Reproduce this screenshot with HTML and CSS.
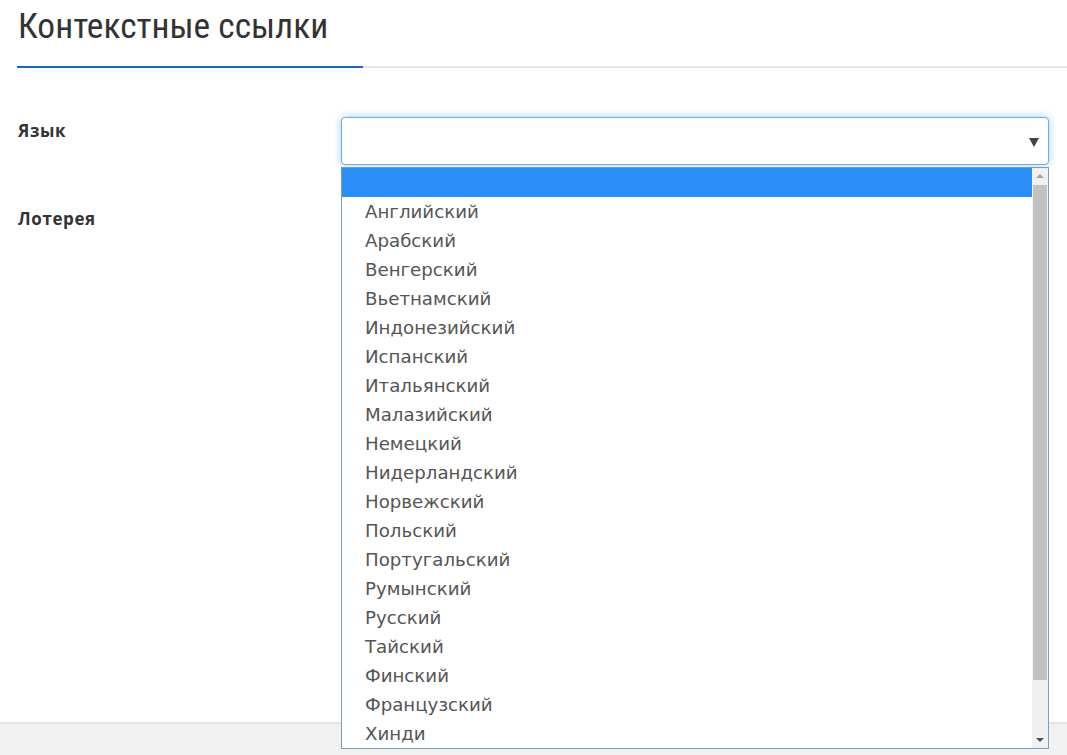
FILE: index.html
```html
<!DOCTYPE html>
<html lang="ru">
<head>
<meta charset="utf-8">
<title>Контекстные ссылки</title>
<link rel="stylesheet" href="styles.css">
</head>
<body>
<div class="page">
  <main class="main">
    <header class="header">
      <h1 class="title">Контекстные ссылки</h1>
      <div class="rule"><span class="rule-accent"></span></div>
    </header>
    <form class="form">
      <div class="row">
        <label class="label">Язык</label>
        <div class="field">
          <div class="select select-open">
            <span class="caret"></span>
          </div>
          <div class="listbox">
            <ul class="options">
              <li class="option option-active">&nbsp;</li>
              <li class="option">Английский</li>
              <li class="option">Арабский</li>
              <li class="option">Венгерский</li>
              <li class="option">Вьетнамский</li>
              <li class="option">Индонезийский</li>
              <li class="option">Испанский</li>
              <li class="option">Итальянский</li>
              <li class="option">Малазийский</li>
              <li class="option">Немецкий</li>
              <li class="option">Нидерландский</li>
              <li class="option">Норвежский</li>
              <li class="option">Польский</li>
              <li class="option">Португальский</li>
              <li class="option">Румынский</li>
              <li class="option">Русский</li>
              <li class="option">Тайский</li>
              <li class="option">Финский</li>
              <li class="option">Французский</li>
              <li class="option">Хинди</li>
            </ul>
            <div class="scrollbar">
              <span class="sb-arrow sb-up"></span>
              <div class="sb-track"><div class="sb-thumb"></div></div>
              <span class="sb-arrow sb-down"></span>
            </div>
          </div>
        </div>
      </div>
      <div class="row">
        <label class="label">Лотерея</label>
        <div class="field">
          <div class="select"><span class="caret"></span></div>
        </div>
      </div>
    </form>
  </main>
  <footer class="footer"></footer>
</div>
</body>
</html>
```

FILE: styles.css
```css
* { box-sizing: border-box; }
html, body { margin: 0; padding: 0; background: #fff; }
body { font-family: "Open Sans", "Noto Sans", sans-serif; color: #333; }

.page {
  min-height: 755px;
  display: flex;
  flex-direction: column;
}
.main { flex: 1; }

.header { padding: 0 0 0 17px; }
.title {
  margin: 0;
  padding: 4px 0 0 1px;
  height: 66px;
  font-family: "Roboto Condensed", Roboto, sans-serif;
  font-stretch: condensed;
  font-weight: 400;
  font-size: 35.4px;
  letter-spacing: 0;
  line-height: 44px;
  color: #333;
}
.rule {
  height: 2px;
  background: #e6e6e6;
  display: flex;
}
.rule-accent {
  width: 346px;
  background: #1b66c3;
}

.form { padding: 49px 18px 0 18px; }
.row {
  display: grid;
  grid-template-columns: 323px 1fr;
  height: 88px;
}
.label {
  font-family: "Open Sans", sans-serif;
  font-weight: 700;
  font-size: 17px;
  letter-spacing: 0.6px;
  color: #333;
  padding-top: 2px;
  line-height: 24px;
}
.field { position: relative; }
.select {
  height: 48px;
  border: 1px solid #ccc;
  border-radius: 4px;
  background: #fff;
  display: flex;
  align-items: center;
  justify-content: flex-end;
  padding-right: 9px;
}
.select-open {
  border-color: #66afe9;
  box-shadow: 0 0 8px rgba(102, 175, 233, 0.6);
}
.caret {
  width: 0;
  height: 0;
  border-left: 5px solid transparent;
  border-right: 5px solid transparent;
  border-top: 9px solid #444;
  margin-top: 2px;
}

.listbox {
  position: absolute;
  top: 50px;
  left: 0;
  right: 0;
  height: 582px;
  background: #fff;
  border: 1px solid #7f9db9;
  display: flex;
  z-index: 10;
  overflow: hidden;
}
.options {
  list-style: none;
  margin: 0;
  padding: 0;
  flex: 1;
}
.option {
  height: 29px;
  padding-top: 1px;
  line-height: 28px;
  padding-left: 23px;
  font-family: "DejaVu Sans", "Noto Sans", sans-serif;
  font-size: 18.2px;
  color: #555;
  white-space: nowrap;
}
.option-active { background: #2b8ff7; color: #fff; }

.scrollbar {
  width: 16px;
  background: #f0f0f0;
  display: flex;
  flex-direction: column;
  align-items: center;
}
.sb-arrow {
  width: 0;
  height: 0;
  border-left: 4px solid transparent;
  border-right: 4px solid transparent;
  margin: 6px 0;
}
.sb-up { border-bottom: 4px solid #a3a3a3; }
.sb-down { border-top: 4px solid #505050; }
.sb-track {
  flex: 1;
  width: 100%;
  padding: 1px 1px 0 1px;
}
.sb-thumb {
  height: 495px;
  background: #c1c1c1;
}

.footer {
  height: 33px;
  background: #f1f1f1;
  border-top: 2px solid #e3e3e3;
}
```
